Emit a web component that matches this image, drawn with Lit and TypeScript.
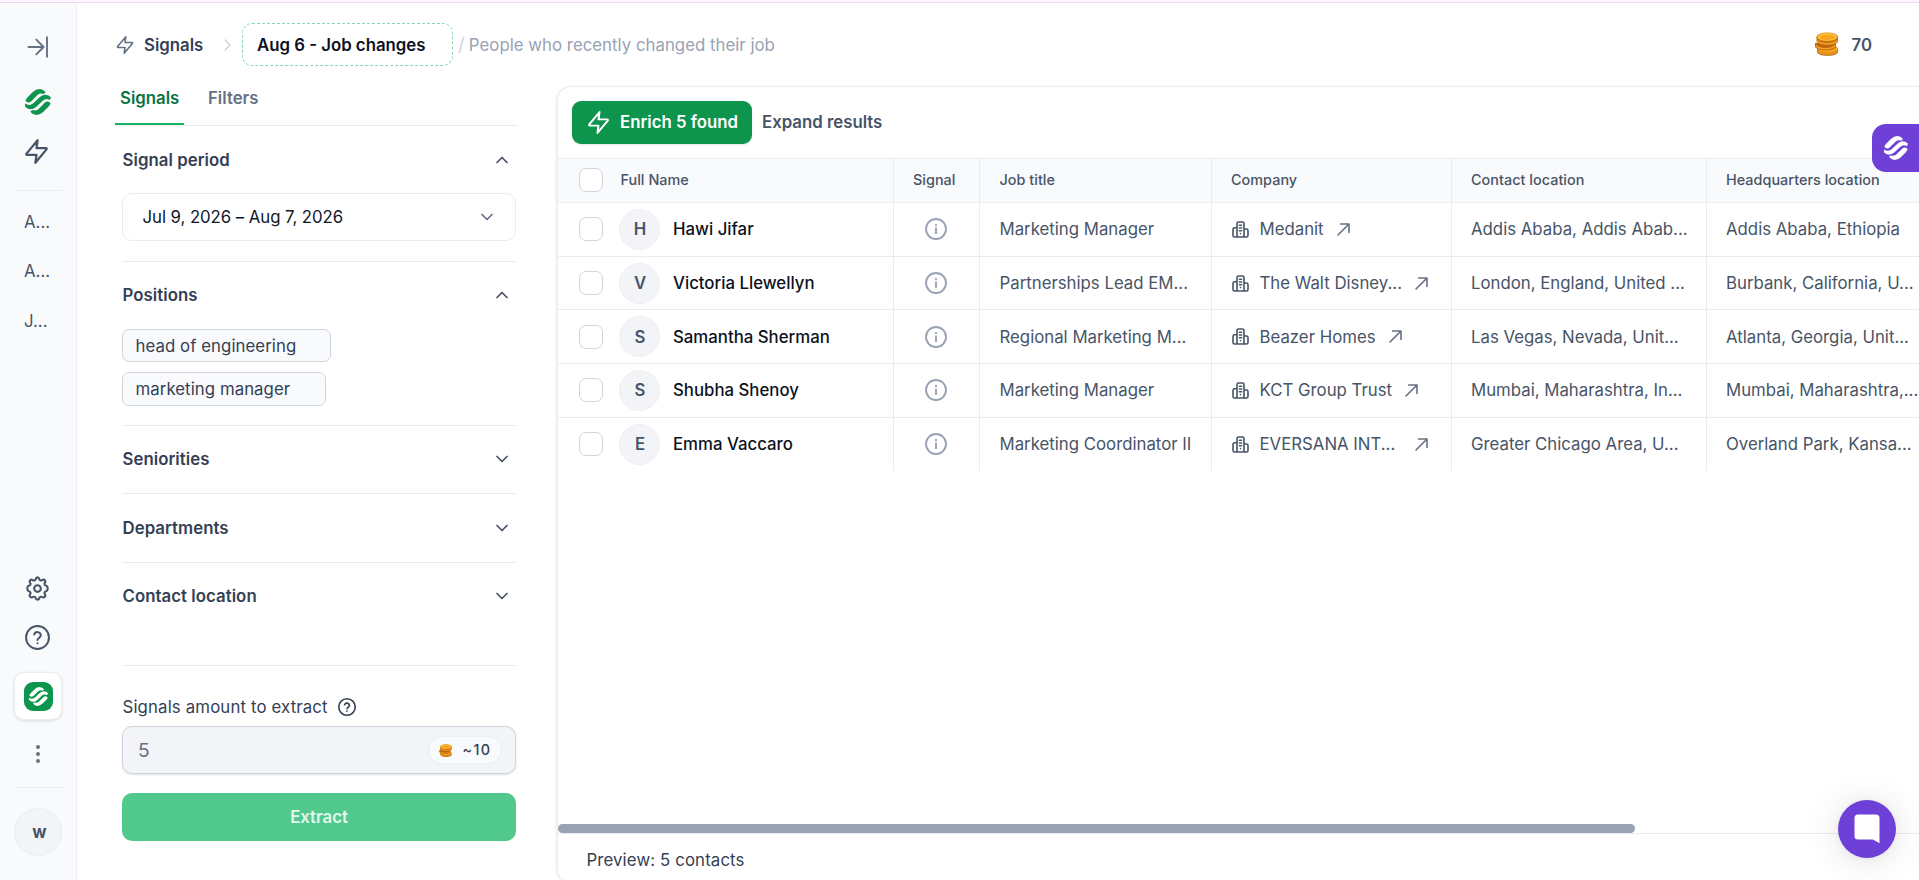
import { LitElement, html, css, svg } from "lit";
import { customElement, property } from "lit/decorators.js";

const ICONS: Record<string, { box: string; body: unknown }> = {
  collapse: {
    box: "0 0 20 20",
    body: svg`<path d="M0.5 10H15.5M8.3 2.6L15.6 10L8.3 17.4M19 0.2V19.8" />`,
  },
  bolt: {
    box: "0 0 24 24",
    body: svg`<path d="M13 2L3.1 13.9c-.4.46-.08 1.1.4 1.1H12l-1 7 9.9-11.9c.4-.46.08-1.1-.4-1.1H12l1-7z" />`,
  },
  logo: {
    box: "0 0 26 26",
    body: svg`<path d="M.4 11.800Q1 9.800 2.600 8.200L7.800 3Q10.800 .1 14.500 .1Q18.300 .2 20.700 3.400L18.600 5Q15.800 4 13 5.600L6 12.400Q4.600 13.600 3.600 13.500Q1.600 13.300 .4 11.800Z" /><path d="M25.600 14.200Q25 16.200 23.400 17.800L18.200 23Q15.200 25.900 11.500 25.900Q7.700 25.800 5.300 22.600L7.400 21Q10.200 22 13 20.400L20 13.600Q21.400 12.400 22.400 12.500Q24.400 12.700 25.600 14.200Z" /><path d="M0 14.600Q2.800 16.400 5.500 15.800Q7.200 15.300 8.600 14L14.900 8Q17.500 5.700 20.600 5.700Q24 5.800 26 8.400L24.800 11Q22.600 9.800 20.500 10.200Q18.800 10.700 17.400 12L11.100 18Q8.500 20.300 5.400 20.300Q2 20.200 0 17.600Z" />`,
  },
  gear: {
    box: "0 0 24 24",
    body: svg`<circle cx="12" cy="12" r="3.2" /><path d="M12 1.3c1.2 0 1.6.9 1.8 1.8.2 1 1.5 1.6 2.4 1 .8-.5 1.9-1 2.8-.1s.5 1.900-.1 2.800c-.6.900 0 2.200 1 2.400.9.200 1.800.6 1.800 1.800v2c0 1.200-.9 1.600-1.800 1.800-1 .2-1.600 1.500-1 2.400.6.800 1 1.900.1 2.800s-2 .6-2.800.1c-.9-.6-2.200 0-2.400 1-.2.9-.6 1.600-1.800 1.600s-1.600-.7-1.800-1.600c-.2-1-1.500-1.600-2.400-1-.8.5-1.900.8-2.800-.1s-.5-2 .1-2.800c.6-.9 0-2.200-1-2.400-.9-.2-1.800-.6-1.800-1.800v-2c0-1.200.9-1.600 1.800-1.800 1-.2 1.600-1.500 1-2.400-.6-.9-1-1.900-.1-2.800s2-.4 2.800.1c.9.6 2.200 0 2.400-1 .2-.900.6-1.800 1.800-1.800z" />`,
  },
  help: {
    box: "0 0 24 24",
    body: svg`<circle cx="12" cy="12" r="11" /><path d="M8.800 9a3.300 3.300 0 0 1 6.400.9c0 2.200-3.200 2.700-3.200 4.400M12 17.400v.1" />`,
  },
  info: {
    box: "0 0 22 22",
    body: svg`<circle cx="11" cy="11" r="10" /><path d="M11 10.300v5M11 6.800v.4" />`,
  },
  up: { box: "0 0 12 8", body: svg`<path d="M1 6.500L6 1.500L11 6.500" />` },
  down: { box: "0 0 12 8", body: svg`<path d="M1 1.500L6 6.500L11 1.500" />` },
  right: { box: "0 0 7 12", body: svg`<path d="M1 1L6 6L1 11" />` },
  arrow: { box: "0 0 13 13", body: svg`<path d="M1 12L12 1M3.600 1H12V9.400" />` },
  building: {
    box: "0 0 17 17",
    body: svg`<path d="M5 16V2.600Q5 1 6.600 1H10.400Q12 1 12 2.600V16M5 6.800H2.600Q1 6.800 1 8.400V14.400Q1 16 2.600 16H14.400Q16 16 16 14.400V9.600Q16 8 14.400 8H12M7.400 4.300H9.600M7.400 7H9.600M7.400 9.700H9.600M8.500 12.500V12.600" />`,
  },
};

@customElement("ui-icon")
export class UiIcon extends LitElement {
  @property() name = "bolt";
  static styles = css`
    :host {
      display: block;
      flex: none;
      width: 24px;
      height: 24px;
    }
    svg {
      display: block;
      width: 100%;
      height: 100%;
      overflow: visible;
      fill: none;
      stroke: currentColor;
      stroke-width: var(--stroke, 2);
      stroke-linecap: round;
      stroke-linejoin: round;
    }
    .solid {
      fill: currentColor;
      stroke: none;
    }
  `;
  render() {
    const icon = ICONS[this.name];
    return html`<svg class=${this.name === "logo" ? "solid" : ""} viewBox=${icon.box}>${icon.body}</svg>`;
  }
}

@customElement("ui-coins")
export class UiCoins extends LitElement {
  static styles = css`
    :host {
      display: block;
      flex: none;
    }
    svg {
      display: block;
      width: 100%;
      height: 100%;
    }
  `;
  render() {
    return html`<svg viewBox="0 0 24 24">
      <path d="M2.500 16.500v3.200c0 2.300 4.800 4.100 10.500 4.100s10.500-1.800 10.500-4.100v-3.200z" fill="#b9630f" />
      <path d="M3.500 19.200c1.500 2 5 3 9.500 3s8-1 9.500-3" fill="none" stroke="#f2a024" stroke-width="1.400" />
      <ellipse cx="13" cy="16.800" rx="10.500" ry="4.200" fill="#f5a11c" />
      <path d="M.5 11v3.200c0 2.300 4.700 4.200 10.500 4.200s10.500-1.900 10.500-4.200V11z" fill="#bd6610" />
      <path d="M1.300 13.500c1.500 2 5 3.200 9.700 3.200s8.200-1.200 9.800-3.200" fill="none" stroke="#f2a024" stroke-width="1.500" />
      <path d="M2 5v4c0 2.500 4.800 4.500 10.800 4.500S23.500 11.500 23.500 9V5z" fill="#c56c0f" />
      <path d="M2.800 8.600c1.600 2 5.300 3.300 10 3.300s8.400-1.300 10-3.300" fill="none" stroke="#f7ab2b" stroke-width="1.500" />
      <ellipse cx="12.700" cy="5.100" rx="10.800" ry="4.700" fill="#d57e10" />
      <ellipse cx="12.700" cy="4.900" rx="9.800" ry="3.900" fill="#ffc23d" />
      <ellipse cx="12.700" cy="5.200" rx="7.600" ry="2.800" fill="#f9a51d" />
    </svg>`;
  }
}

interface Contact {
  name: string;
  title: string;
  company: string;
  cut?: boolean;
  place: string;
  hq: string;
}

const CONTACTS: Contact[] = [
  { name: "Hawi Jifar", title: "Marketing Manager", company: "Medanit", place: "Addis Ababa, Addis Abab...", hq: "Addis Ababa, Ethiopia" },
  { name: "Victoria Llewellyn", title: "Partnerships Lead EM...", company: "The Walt Disney...", cut: true, place: "London, England, United ...", hq: "Burbank, California, U..." },
  { name: "Samantha Sherman", title: "Regional Marketing M...", company: "Beazer Homes", place: "Las Vegas, Nevada, Unit...", hq: "Atlanta, Georgia, Unit..." },
  { name: "Shubha Shenoy", title: "Marketing Manager", company: "KCT Group Trust", place: "Mumbai, Maharashtra, In...", hq: "Mumbai, Maharashtra,..." },
  { name: "Emma Vaccaro", title: "Marketing Coordinator II", company: "EVERSANA INT...", cut: true, place: "Greater Chicago Area, U...", hq: "Overland Park, Kansa..." },
];

@customElement("app-root")
export class AppRoot extends LitElement {
  static styles = css`
    :host {
      display: block;
      position: relative;
      width: 100%;
      height: 880px;
      overflow: hidden;
      background: #fff;
      color: #344054;
      font: 400 16.8px/24px Inter, sans-serif;
    }
    * {
      box-sizing: border-box;
    }
    .frame {
      height: 100%;
      display: flex;
      flex-direction: column;
    }
    .strip {
      flex: none;
      height: 4px;
      background: linear-gradient(#fdf6fe 2px, #ead9f2 2px, #ead9f2 3px, #fff 3px);
    }
    .shell {
      flex: 1;
      min-height: 0;
      display: flex;
    }
    .rail {
      flex: none;
      width: 77px;
      background: #f9fafc;
      border-right: 1px solid #eaecf0;
      display: flex;
      flex-direction: column;
      padding: 33px 14px 24px;
      color: #475467;
    }
    .rail .collapse {
      width: 20px;
      height: 20px;
      margin-left: 14px;
      color: #667085;
      --stroke: 1.9;
    }
    .rail .mark {
      width: 26px;
      height: 26px;
      margin: 32px 0 0 10.500px;
      color: #0d944d;
    }
    .rail .bolt {
      width: 27px;
      height: 27px;
      margin: 22.500px 0 0 9px;
      --stroke: 2;
    }
    .rule {
      height: 1px;
      background: #eaecf0;
    }
    .rail .first {
      margin: 25px 0 0;
    }
    .lists {
      display: flex;
      flex-direction: column;
      gap: 25.600px;
      padding: 19px 0 0 10px;
      flex: 1;
    }
    .rail .util {
      width: 25px;
      height: 25px;
      margin-left: 11px;
    }
    .rail .ask {
      margin-top: 24px;
      --stroke: 1.900;
    }
    .tile {
      width: 48px;
      height: 48px;
      margin-top: 22px;
      background: #fff;
      border: 1px solid #eceef2;
      border-radius: 10px;
      box-shadow: 0 1px 3px rgba(16, 24, 40, 0.14);
      display: grid;
      place-items: center;
    }
    .tile span {
      width: 29px;
      height: 29px;
      border-radius: 9px;
      background: #0d944d;
      display: grid;
      place-items: center;
    }
    .tile ui-icon {
      width: 19px;
      height: 19px;
      color: #fff;
    }
    .dots {
      display: flex;
      flex-direction: column;
      gap: 3px;
      margin: 25px 0 24px 22px;
    }
    .dots i {
      width: 4px;
      height: 4px;
      border-radius: 50%;
      background: #667085;
    }
    .user {
      width: 48px;
      height: 48px;
      margin-top: 20px;
      border-radius: 50%;
      background: #f2f4f7;
      border: 1px solid #eceef1;
      display: grid;
      place-items: center;
      font-weight: 700;
      font-size: 16.800px;
      padding-left: 3px;
    }
    .page {
      flex: 1;
      min-width: 0;
      display: flex;
      flex-direction: column;
    }
    .head {
      flex: none;
      height: 82px;
      padding: 19px 47px 0 38px;
      display: flex;
      align-items: flex-start;
    }
    .crumbs {
      flex: 1;
      height: 43px;
      display: flex;
      align-items: center;
    }
    .crumbs .bolt {
      width: 20px;
      height: 20px;
      color: #667085;
      --stroke: 1.900;
    }
    .crumbs b {
      font-weight: 600;
      margin-left: 9px;
      width: 79.500px;
    }
    .crumbs .right {
      width: 7px;
      height: 12px;
      color: #d0d5dd;
      --stroke: 1.500;
    }
    .title {
      width: 211px;
      height: 43px;
      margin: 0 5px 0 11.500px;
      padding-left: 14px;
      border: 1px dashed #88d8ad;
      border-radius: 10px;
      font-weight: 600;
      line-height: 42px;
      color: #0c111d;
    }
    .slash {
      color: #d0d5dd;
      font-size: 19px;
      margin-right: 4px;
    }
    .sub {
      color: #98a2b3;
      letter-spacing: 0.020px;
    }
    .credits {
      height: 43px;
      display: flex;
      align-items: center;
      gap: 12.500px;
      font-weight: 600;
      color: #475467;
    }
    .credits ui-coins {
      width: 25px;
      height: 24px;
      margin-top: -1px;
    }
    .body {
      flex: 1;
      min-height: 0;
      display: flex;
    }
    .side {
      flex: none;
      width: 480px;
      padding-left: 38px;
      display: flex;
      flex-direction: column;
    }
    .tabs {
      width: 403px;
      height: 40px;
      border-bottom: 1px solid #eaecf0;
      display: flex;
      font-weight: 600;
    }
    .tabs span {
      padding: 0 5px;
      height: 39px;
      margin-right: 19px;
      color: #667085;
    }
    .tabs .on {
      width: 69px;
      color: #087443;
      border-bottom: 2px solid #16b364;
    }
    .form {
      width: 394px;
      margin-left: 7px;
      display: flex;
      flex-direction: column;
    }
    .sec {
      display: flex;
      align-items: center;
      justify-content: space-between;
      padding: 0 8.500px 1px 0.500px;
      height: 67px;
      font-weight: 600;
      letter-spacing: 0.050px;
    }
    .sec:first-child {
      padding-bottom: 0;
    }
    .sec.tall {
      height: 68px;
    }
    .gap {
      height: 35px;
    }
    .sec ui-icon,
    .select ui-icon {
      width: 12px;
      height: 8px;
      color: #475467;
      --stroke: 1.700;
    }
    .select {
      height: 48px;
      margin: 0 0 20px;
      padding: 0 22.500px 0 19.500px;
      border: 1px solid #eaecf0;
      border-radius: 10px;
      display: flex;
      align-items: center;
      justify-content: space-between;
      color: #101828;
      letter-spacing: -0.060px;
    }
    .select ui-icon {
      color: #667085;
    }
    .chips {
      display: flex;
      flex-direction: column;
      gap: 10px;
      padding-bottom: 19px;
    }
    .chip {
      width: 209px;
      height: 33px;
      padding-left: 12.500px;
      line-height: 32px;
      background: #f9fafc;
      border: 1px solid #d0d5dd;
      border-radius: 7px;
      letter-spacing: 0.060px;
    }
    .chip.short {
      width: 204px;
      height: 34px;
    }
    .amount {
      display: flex;
      align-items: center;
      gap: 10px;
      padding-left: 0.500px;
      margin-top: 29px;
      letter-spacing: 0.140px;
    }
    .amount ui-icon {
      width: 18px;
      height: 18px;
      --stroke: 2.200;
    }
    .input {
      height: 48px;
      margin-top: 7px;
      padding: 0 13px 0 15px;
      background: #f2f4f7;
      border: 1px solid #d0d5dd;
      border-radius: 10px;
      box-shadow: 0 1px 2px rgba(16, 24, 40, 0.12);
      display: flex;
      align-items: center;
      justify-content: space-between;
      font-size: 19.200px;
      color: #667085;
    }
    .pill {
      width: 74px;
      height: 28px;
      padding-left: 10px;
      border: 1px solid #eceef2;
      border-radius: 14px;
      background: #f9fafb;
      display: flex;
      align-items: center;
      gap: 10.500px;
      font-size: 14.400px;
      font-weight: 500;
      letter-spacing: 1.300px;
      color: #344054;
    }
    .pill ui-coins {
      width: 13px;
      height: 13px;
    }
    .extract {
      height: 48px;
      margin-top: 19px;
      border-radius: 10px;
      background: #52c98c;
      color: #e3f8ec;
      font-weight: 600;
      text-align: center;
      line-height: 48px;
    }
    .panel {
      flex: 1;
      min-width: 0;
      border: 1px solid #eaecf0;
      border-right: 0;
      border-bottom-color: transparent;
      border-radius: 14px 0 0 10px;
      box-shadow: -1px 1px 3px rgba(16, 24, 40, 0.08);
      display: flex;
      flex-direction: column;
      overflow: hidden;
    }
    .tools {
      flex: none;
      height: 71px;
      padding: 14px 14px 0;
      display: flex;
      gap: 10px;
      font-weight: 600;
      line-height: 43px;
      color: #475467;
    }
    .enrich {
      width: 180px;
      height: 43px;
      padding-left: 14px;
      border-radius: 9px;
      background: #0d944d;
      color: #fff;
      display: flex;
      align-items: center;
      gap: 9px;
      box-shadow: 0 1px 2px rgba(16, 24, 40, 0.1);
    }
    .enrich ui-icon {
      width: 25px;
      height: 25px;
      --stroke: 1.900;
    }
    .table {
      flex: 1;
      min-height: 0;
    }
    .row {
      display: grid;
      grid-template-columns: 336px 86px 232px 240px 255px 260px;
      height: 53.700px;
      color: #475467;
    }
    .row > div {
      display: flex;
      align-items: center;
      padding-left: 19px;
      white-space: nowrap;
      border-bottom: 1px solid #eaecf0;
      border-right: 1px solid #eaecf0;
    }
    .row:last-child > div {
      border-bottom: 0;
      padding-bottom: 1px;
    }
    .row.top {
      height: 45px;
      background: #f9fafc;
      border-top: 1px solid #eaecf0;
      font-size: 14.400px;
      font-weight: 500;
      letter-spacing: 0.030px;
    }
    .row.top > div {
      padding-bottom: 1px;
    }
    .row > .who {
      padding-left: 21px;
      font-weight: 500;
      color: #0c111d;
    }
    .row.top > .who {
      color: #475467;
    }
    .box {
      width: 24px;
      height: 24px;
      border: 1px solid #d0d5dd;
      border-radius: 7px;
      background: #fff;
      margin-right: 16px;
    }
    .top .box {
      margin-right: 17.500px;
    }
    .face {
      width: 41px;
      height: 41px;
      margin-right: 13px;
      border-radius: 50%;
      border: 1px solid #eff0f3;
      background: #f2f4f7;
      color: #475467;
      font-weight: 600;
      display: grid;
      place-items: center;
      padding-left: 1px;
    }
    .row > .title-cell {
      padding-left: 19.500px;
    }
    .row > .sig {
      padding-left: 0;
      padding-right: 1px;
      justify-content: center;
      color: #98a2b3;
    }
    .sig ui-icon {
      width: 22px;
      height: 22px;
      --stroke: 1.900;
    }
    .co .b {
      width: 17px;
      height: 17px;
      margin: 0 11px 0 0.500px;
      --stroke: 1.600;
    }
    .co .a {
      width: 13px;
      height: 13px;
      margin-left: 13px;
      color: #667085;
      --stroke: 1.600;
    }
    .co .fix {
      width: 142.500px;
    }
    .bar {
      flex: none;
      height: 9px;
      width: 1077px;
      border-radius: 5px;
      background: #98a2b3;
    }
    .foot {
      flex: none;
      height: 46px;
      border-top: 1px solid #eaecf0;
      padding: 14px 0 0 28.500px;
      letter-spacing: 0.120px;
    }
    .flag {
      position: absolute;
      right: 0;
      top: 124px;
      width: 47px;
      height: 48px;
      border-radius: 14px 0 0 14px;
      background: #6e40d8;
      color: #fff;
      padding: 12px 0 0 12px;
    }
    .chat {
      position: absolute;
      right: 23px;
      top: 800px;
      width: 58px;
      height: 58px;
      border-radius: 50%;
      background: #6e40d8;
      box-shadow: 0 1px 7px rgba(0, 0, 0, 0.06), 0 2px 36px rgba(0, 0, 0, 0.12);
    }
    .chat svg {
      display: block;
      margin: 14px 0 0 16px;
    }
  `;

  private section(label: string, open = false, tall = false) {
    return html`<div class=${tall ? "sec tall" : "sec"}>
      <span>${label}</span><ui-icon name=${open ? "up" : "down"}></ui-icon>
    </div>`;
  }

  render() {
    return html`
      <div class="frame">
        <div class="strip"></div>
        <div class="shell">
          <nav class="rail">
            <ui-icon class="collapse" name="collapse"></ui-icon>
            <ui-icon class="mark" name="logo"></ui-icon>
            <ui-icon class="bolt" name="bolt"></ui-icon>
            <div class="rule first"></div>
            <div class="lists"><span>A...</span><span>A...</span><span>J...</span></div>
            <ui-icon class="util" name="gear"></ui-icon>
            <ui-icon class="util ask" name="help"></ui-icon>
            <div class="tile"><span><ui-icon name="logo"></ui-icon></span></div>
            <div class="dots"><i></i><i></i><i></i></div>
            <div class="rule"></div>
            <div class="user">w</div>
          </nav>
          <div class="page">
            <header class="head">
              <div class="crumbs">
                <ui-icon class="bolt" name="bolt"></ui-icon>
                <b>Signals</b>
                <ui-icon class="right" name="right"></ui-icon>
                <div class="title">Aug 6 - Job changes</div>
                <span class="slash">/</span>
                <span class="sub">People who recently changed their job</span>
              </div>
              <div class="credits"><ui-coins></ui-coins><span>70</span></div>
            </header>
            <div class="body">
              <aside class="side">
                <div class="tabs"><span class="on">Signals</span><span>Filters</span></div>
                <div class="form">
                  ${this.section("Signal period", true)}
                  <div class="select"><span>Jul 9, 2026 – Aug 7, 2026</span><ui-icon name="down"></ui-icon></div>
                  <div class="rule"></div>
                  ${this.section("Positions", true)}
                  <div class="chips">
                    <div class="chip">head of engineering</div>
                    <div class="chip short">marketing manager</div>
                  </div>
                  <div class="rule"></div>
                  ${this.section("Seniorities")}
                  <div class="rule"></div>
                  ${this.section("Departments", false, true)}
                  <div class="rule"></div>
                  ${this.section("Contact location")}
                  <div class="gap"></div>
                  <div class="rule"></div>
                  <div class="amount"><span>Signals amount to extract</span><ui-icon name="help"></ui-icon></div>
                  <div class="input"><span>5</span><span class="pill"><ui-coins></ui-coins>~10</span></div>
                  <div class="extract">Extract</div>
                </div>
              </aside>
              <main class="panel">
                <div class="tools">
                  <div class="enrich"><ui-icon name="bolt"></ui-icon>Enrich 5 found</div>
                  <span>Expand results</span>
                </div>
                <div class="table">
                  <div class="row top">
                    <div class="who"><span class="box"></span>Full Name</div>
                    <div>Signal</div>
                    <div class="title-cell">Job title</div>
                    <div>Company</div>
                    <div>Contact location</div>
                    <div>Headquarters location</div>
                  </div>
                  ${CONTACTS.map(
                    (c) => html`<div class="row">
                      <div class="who"><span class="box"></span><span class="face">${c.name[0]}</span>${c.name}</div>
                      <div class="sig"><ui-icon name="info"></ui-icon></div>
                      <div class="title-cell">${c.title}</div>
                      <div class="co">
                        <ui-icon class="b" name="building"></ui-icon>
                        <span class=${c.cut ? "fix" : ""}>${c.company}</span>
                        <ui-icon class="a" name="arrow"></ui-icon>
                      </div>
                      <div>${c.place}</div>
                      <div>${c.hq}</div>
                    </div>`
                  )}
                </div>
                <div class="bar"></div>
                <div class="foot">Preview: 5 contacts</div>
              </main>
            </div>
          </div>
        </div>
      </div>
      <div class="flag"><ui-icon name="logo"></ui-icon></div>
      <div class="chat">
        <svg width="26" height="30" viewBox="0 0 26 30">
          <path d="M4 .5H22Q25.500 .5 25.500 4V29.300L19 25.500H4Q.5 25.500 .5 22V4Q.5 .5 4 .5Z" fill="#fff" />
        </svg>
      </div>
    `;
  }
}
